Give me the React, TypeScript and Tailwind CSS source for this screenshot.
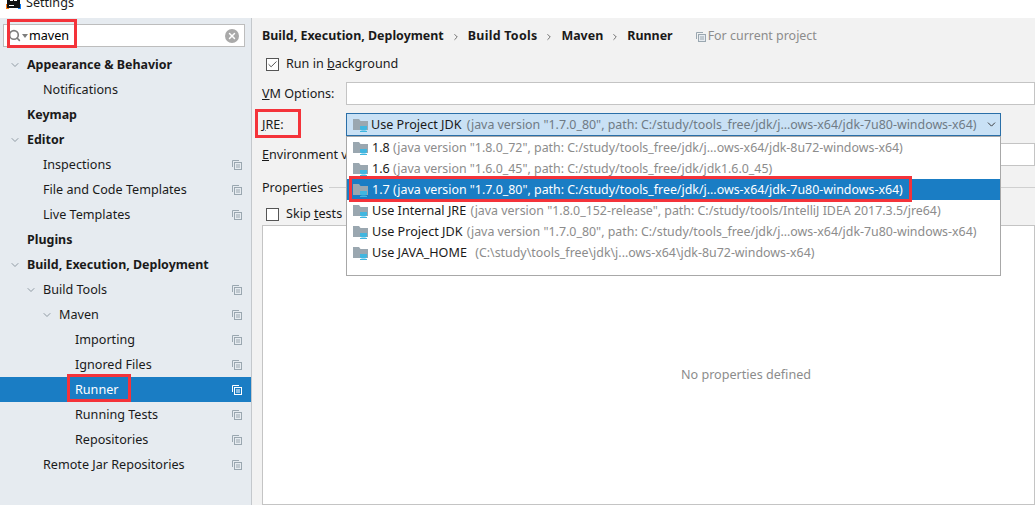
import React from 'react';
import { Check, ChevronDown, ChevronRight, Search, X } from 'lucide-react';

const TREE = [
  { label: 'Appearance & Behavior', indent: 27, bold: true, arrow: 'down', arrowX: 9 },
  { label: 'Notifications', indent: 43 },
  { label: 'Keymap', indent: 27, bold: true },
  { label: 'Editor', indent: 27, bold: true, arrow: 'down', arrowX: 9 },
  { label: 'Inspections', indent: 43, copy: true },
  { label: 'File and Code Templates', indent: 43, copy: true },
  { label: 'Live Templates', indent: 43, copy: true },
  { label: 'Plugins', indent: 27, bold: true },
  { label: 'Build, Execution, Deployment', indent: 27, bold: true, arrow: 'down', arrowX: 9 },
  { label: 'Build Tools', indent: 43, arrow: 'down', arrowX: 25, copy: true },
  { label: 'Maven', indent: 59, arrow: 'down', arrowX: 41, copy: true },
  { label: 'Importing', indent: 75, copy: true },
  { label: 'Ignored Files', indent: 75, copy: true },
  { label: 'Runner', indent: 75, copy: true, selected: true },
  { label: 'Running Tests', indent: 75, copy: true },
  { label: 'Repositories', indent: 75, copy: true },
  { label: 'Remote Jar Repositories', indent: 43, copy: true },
];

const JDKS = [
  { name: '1.8', nudge: 0, detail: '(java version "1.8.0_72", path: C:/study/tools_free/jdk/j...ows-x64/jdk-8u72-windows-x64)' },
  { name: '1.6', nudge: 0, detail: '(java version "1.6.0_45", path: C:/study/tools_free/jdk/jdk1.6.0_45)' },
  { name: '1.7', nudge: 0, detail: '(java version "1.7.0_80", path: C:/study/tools_free/jdk/j...ows-x64/jdk-7u80-windows-x64)', selected: true },
  { name: 'Use Internal JRE', nudge: 1, detail: '(java version "1.8.0_152-release", path: C:/study/tools/IntelliJ IDEA 2017.3.5/jre64)' },
  { name: 'Use Project JDK', nudge: 1, detail: '(java version "1.7.0_80", path: C:/study/tools_free/jdk/j...ows-x64/jdk-7u80-windows-x64)' },
  { name: 'Use JAVA_HOME', nudge: 5, detail: '(C:\\study\\tools_free\\jdk\\j...ows-x64\\jdk-8u72-windows-x64)' },
];

function CopyIcon({ light }: { light?: boolean }) {
  const c = light ? '#ffffff' : '#9aa7b0';
  return (
    <svg width="10" height="10" viewBox="0 0 10 10" fill="none" stroke={c}>
      <path d="M.5 7v-6.500h6.500" />
      <rect x="2.500" y="2.500" width="7" height="7" fill={light ? '#1a7dc4' : '#e6ebf0'} />
      <path d="M4 5h4M4 7h4" />
    </svg>
  );
}

function JdkIcon() {
  return (
    <svg width="16" height="14" viewBox="0 0 16 14" className="shrink-0">
      <path d="M0 1h6l1.500 2H15v9H0z" fill="#9aa7b0" />
      <path d="M7 8h7v2.500a2 2 0 0 1-2 2H9a2 2 0 0 1-2-2z" fill="#40b6e0" />
      <path d="M7 13h7v1H7z" fill="#40b6e0" />
    </svg>
  );
}

function Mark({ className }: { className: string }) {
  return <div className={`absolute border-[3px] border-[#f4333a] ${className}`} />;
}

export default function App() {
  return (
    <div className="relative h-[505px] w-[1035px] overflow-hidden bg-[#f2f2f2] font-['Noto_Sans','Open_Sans',sans-serif] text-[12.6px] text-[#1a1a1a]">
      <div className="flex h-[18px] items-center gap-[7px] overflow-hidden bg-white pl-[6px]">
        <svg width="15" height="13" viewBox="0 0 15 13" className="-mt-[14px] shrink-0">
          <rect x="0" y="8" width="3" height="5" fill="#f97a12" />
          <rect x="12" y="8" width="3" height="5" fill="#087cfa" />
          <rect x="1" y="0" width="13" height="12" fill="#111" />
          <rect x="4" y="3" width="3" height="2" fill="#fff" />
          <rect x="8" y="3" width="3" height="2" fill="#fff" />
          <rect x="3" y="9" width="5" height="1" fill="#fff" />
        </svg>
        <span className="-mt-[12px] -ml-[2px] leading-none">Settings</span>
      </div>

      <div className="flex h-[487px]">
        <aside className="w-[252px] shrink-0 border-r border-[#c4c8cc] bg-[#e6ebf0]">
          <div className="mx-[3px] mt-[6px] flex h-[23px] w-[242px] items-center border border-[#bdbdbd] bg-white pl-[4px] pr-[5px]">
            <Search size={13} strokeWidth={3} className="shrink-0 text-[#7d7d7d]" />
            <div className="ml-[1px] h-0 w-0 border-x-[3px] border-t-[4px] border-x-transparent border-t-[#7d7d7d]" />
            <span className="ml-[1px] pt-[1px] text-black">maven</span>
            <span className="ml-auto flex h-[14px] w-[14px] items-center justify-center rounded-full bg-[#a9a9a9]">
              <X size={10} strokeWidth={3.5} className="text-white" />
            </span>
          </div>
          <div className="mt-[5px]">
            {TREE.map((row) => (
              <div
                key={row.label}
                className={`relative flex h-[25px] items-center ${row.selected ? 'bg-[#1a7dc4] text-white' : ''} ${row.bold ? 'text-[12.450px] font-bold' : ''}`}
                style={{ paddingLeft: row.indent }}
              >
                {row.arrow && (
                  <ChevronDown
                    size={12}
                    strokeWidth={2}
                    className="absolute text-[#8f9aa3]"
                    style={{ left: row.arrowX }}
                  />
                )}
                <span className="pt-[2px]">{row.label}</span>
                {row.copy && (
                  <span className="absolute left-[232px] flex">
                    <CopyIcon light={row.selected} />
                  </span>
                )}
              </div>
            ))}
          </div>
        </aside>

        <main className="min-w-0 flex-1 pl-[10px]">
          <div className="flex h-[34px] items-center pt-[3px] text-[12.450px] font-bold">
            <span>Build, Execution, Deployment</span>
            <ChevronRight size={10} strokeWidth={2} className="mx-[7px] text-[#555]" />
            <span className="tracking-[0.27px]">Build Tools</span>
            <ChevronRight size={10} strokeWidth={2} className="mx-[7px] text-[#555]" />
            <span>Maven</span>
            <ChevronRight size={10} strokeWidth={2} className="mx-[7px] text-[#555]" />
            <span>Runner</span>
            <span className="ml-[23px] mr-[2px] flex">
              <CopyIcon />
            </span>
            <span className="font-normal text-[#8c8c8c]">For current project</span>
          </div>

          <div className="-mt-[1px] flex h-[26px] items-center pl-[4px]">
            <span className="flex h-[13px] w-[13px] items-center justify-center border border-[#555] bg-white">
              <Check size={11} strokeWidth={2} className="text-[#444]" />
            </span>
            <span className="ml-[7px]">
              Run in <span className="underline">b</span>ackground
            </span>
          </div>

          <div className="mt-[5px] flex h-[23px] items-center">
            <span className="w-[84px] shrink-0 pt-[2px]">
              <span className="underline">V</span>M Options:
            </span>
            <div className="h-full flex-1 border border-[#c4c4c4] bg-white" />
          </div>

          <div className="mt-[8px] flex h-[23px] items-center">
            <span className="w-[84px] shrink-0 pt-[2px]">
              <span className="underline">J</span>RE:
            </span>
            <div className="flex h-full w-[655px] items-center border border-[#2a6fa8] bg-[#c9e1f5] pl-[6px] pr-[2px]">
              <JdkIcon />
              <span className="ml-[2px] whitespace-nowrap pt-[2px]">
                Use Project JDK <span className="ml-[2px] text-[12.400px] text-[#6f7b85]">(java version "1.7.0_80", path: C:/study/tools_free/jdk/j...ows-x64/jdk-7u80-windows-x64)</span>
              </span>
              <ChevronDown size={13} strokeWidth={1.75} className="ml-auto shrink-0 text-[#333]" />
            </div>
          </div>

          <div className="mt-[7px] flex h-[23px] items-center">
            <span className="w-[84px] shrink-0 overflow-hidden whitespace-nowrap pt-[2px]">
              <span className="underline">E</span>nvironment variables
            </span>
            <div className="h-full flex-1 border border-[#c4c4c4] bg-white" />
          </div>

          <div className="mt-[11px] flex h-[21px] items-center">
            <span className="pt-[2px]">Properties</span>
            <div className="ml-[6px] h-px flex-1 bg-[#d0d0d0]" />
          </div>

          <div className="mt-[5px] flex h-[22px] items-center pl-[4px]">
            <span className="h-[13px] w-[13px] border border-[#555] bg-white" />
            <span className="ml-[7px]">
              Skip <span className="underline">t</span>ests
            </span>
          </div>

          <div className="flex h-[280px] items-center justify-center border border-[#c4c4c4] bg-white pl-[195px] pt-[20px] text-[#8c8c8c]">
            No properties defined
          </div>
        </main>
      </div>

      <div className="absolute left-[346px] top-[136px] z-10 h-[140px] w-[655px] border border-[#a8a8a8] bg-white">
        {JDKS.map((jdk) => (
          <div
            key={jdk.name}
            className={`flex h-[21px] items-center gap-[3px] whitespace-nowrap pl-[6px] ${jdk.selected ? 'bg-[#1a7dc4] text-white' : ''}`}
          >
            <JdkIcon />
            <span className="pt-[2px]">
              {jdk.name}{' '}
              <span
                className={`text-[12.400px] ${jdk.selected ? 'text-white' : 'text-[#8c8c8c]'}`}
                style={{ marginLeft: jdk.nudge }}
              >
                {jdk.detail}
              </span>
            </span>
          </div>
        ))}
      </div>

      <Mark className="left-[7px] top-[19px] h-[29px] w-[70px]" />
      <Mark className="left-[67px] top-[374px] h-[28px] w-[64px]" />
      <Mark className="left-[255px] top-[109px] h-[29px] w-[46px]" />
      <Mark className="left-[349px] top-[176px] z-20 h-[26px] w-[563px]" />
    </div>
  );
}
